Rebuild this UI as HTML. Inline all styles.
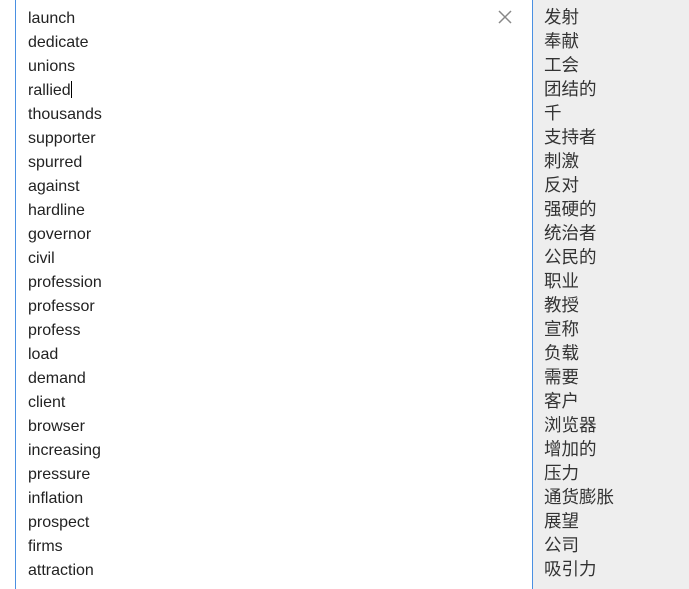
<html><head><style>
body{margin:0;width:689px;height:589px;background:#fff;position:relative;overflow:hidden;font-family:"Liberation Sans","Noto Sans CJK SC",sans-serif;font-size:16px;color:#222}
#l{position:absolute;left:15px;top:0;width:516px;height:589px;border-left:1px solid #4a90e2;}
#r{position:absolute;left:532px;top:0;width:160px;height:589px;background:#eee;border-left:1px solid #4a90e2;}
.t{position:absolute;top:7px;line-height:24px;white-space:pre}
#l .t{left:12px}
#r .t{left:11px;top:5px;color:#333;font-size:17.5px}
#x{position:absolute;left:481px;top:9px}
.c{display:inline-block;width:1px;height:17px;background:#000;vertical-align:-3px}
</style></head><body>
<div id="l"><div class="t">launch
dedicate
unions
rallied<span class="c"></span>
thousands
supporter
spurred
against
hardline
governor
civil
profession
professor
profess
load
demand
client
browser
increasing
pressure
inflation
prospect
firms
attraction</div>
<svg id="x" width="16" height="16"><path d="M2 2L14 14M14 2L2 14" stroke="#888" stroke-width="1.5"/></svg></div>
<div id="r"><div class="t">发射
奉献
工会
团结的
千
支持者
刺激
反对
强硬的
统治者
公民的
职业
教授
宣称
负载
需要
客户
浏览器
增加的
压力
通货膨胀
展望
公司
吸引力</div></div>
</body></html>
